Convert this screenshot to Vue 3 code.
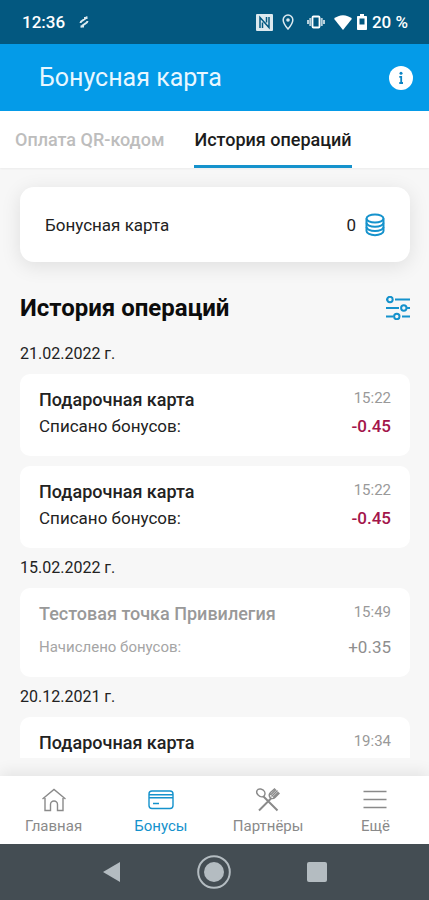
<template>
  <div class="app">
    <div class="status-bar">
      <div class="status-side">
        <span>12:36</span>
        <svg class="status-swirl" width="10" height="14" viewBox="0 0 10 14" aria-hidden="true">
          <path d="M1.500 8C1.500 5 6.500 5.500 8 1.500M2 12.500C3.500 8.500 8.500 9 8.500 6M5 3h3.500M1.500 11.500h3.500" />
        </svg>
      </div>
      <div class="status-side status-icons">
        <svg width="17" height="17" viewBox="0 0 17 17" aria-hidden="true">
          <rect width="17" height="17" rx="1" fill="#dce9ef" />
          <path d="M4 14V3.500L13 13.500V3M6.500 14V8.500M10.500 8.500V3" fill="none" stroke="#035880" stroke-width="1.500" />
        </svg>
        <svg class="pin" width="12" height="16" viewBox="0 0 12 16" aria-hidden="true">
          <path d="M6 1a4.800 4.800 0 0 0-4.800 4.900C1.200 9.300 6 15 6 15s4.800-5.700 4.800-9.100A4.800 4.800 0 0 0 6 1z" fill="none" stroke="#dce9ef" stroke-width="1.500" />
          <circle cx="6" cy="6" r="1.800" fill="#dce9ef" />
        </svg>
        <svg class="vibrate" width="18" height="14" viewBox="0 0 18 14" aria-hidden="true">
          <rect x="5.500" y="1.500" width="7" height="11" rx="1" fill="none" stroke="#fff" stroke-width="1.800" />
          <path d="M3.300 3v8M14.700 3v8M1 5v4M17 5v4" fill="none" stroke="#b9d1dc" stroke-width="2" />
        </svg>
        <svg width="18" height="15" viewBox="0 0 18 15" aria-hidden="true">
          <path d="M0 3.800C5-1 13-1 18 3.800L9 15z" fill="#fff" />
        </svg>
        <svg width="10" height="16" viewBox="0 0 10 16" aria-hidden="true">
          <path d="M3 0h4v2h2.200a.8.800 0 0 1 .8.800v12.400a.8.800 0 0 1-.8.800H.8a.8.800 0 0 1-.8-.8V2.800A.8.800 0 0 1 .8 2H3z" fill="#fff" />
          <path d="M2.500 4.500h5v6h-5z" fill="#035880" />
        </svg>
        <span>20 %</span>
      </div>
    </div>

    <header class="header">
      <h1>Бонусная карта</h1>
      <button class="icon-button" type="button" aria-label="Информация">
        <svg width="24" height="24" viewBox="0 0 24 24">
          <circle cx="12" cy="12" r="12" fill="#fff" />
          <circle cx="12" cy="7.200" r="1.500" fill="#0b84c4" />
          <path d="M10.300 10.800H12.200V16.500M10.300 17H14" fill="none" stroke="#0b84c4" stroke-width="1.800" />
        </svg>
      </button>
    </header>

    <nav class="tabs">
      <button
        v-for="tab in tabs"
        :key="tab"
        class="tab"
        :class="{ active: tab === activeTab }"
        type="button"
        @click="activeTab = tab"
      >
        {{ tab }}
      </button>
    </nav>

    <main class="content">
      <section class="balance">
        <span>Бонусная карта</span>
        <span class="balance-value">
          0
          <svg width="20" height="24" viewBox="0 0 20 24" aria-hidden="true">
            <ellipse cx="10" cy="5.500" rx="8.500" ry="4" />
            <path d="M1.500 5.500v12.500c0 2.300 3.800 4.200 8.500 4.200s8.500-1.900 8.500-4.200V5.500" />
            <path d="M1.500 9.700c0 2.300 3.800 4 8.500 4s8.500-1.700 8.500-4M1.500 14c0 2.300 3.800 4 8.500 4s8.500-1.700 8.500-4" />
          </svg>
        </span>
      </section>

      <div class="history-head">
        <h2>История операций</h2>
        <button class="icon-button" type="button" aria-label="Фильтр">
          <svg class="filter" width="24" height="24" viewBox="0 0 24 24">
            <path d="M0 3.500h1M9 3.500h15M0 12h13M21 12h3M0 20.500h7.500M16 20.500h8" />
            <circle cx="4" cy="3.500" r="2.700" />
            <circle cx="17.800" cy="12" r="2.700" />
            <circle cx="10.800" cy="20.500" r="2.700" />
          </svg>
        </button>
      </div>

      <section v-for="group in history" :key="group.date" class="group">
        <h3>{{ group.date }}</h3>
        <article
          v-for="(item, index) in group.items"
          :key="index"
          class="operation"
          :class="{ muted: item.muted }"
        >
          <div class="row">
            <span class="name">{{ item.name }}</span>
            <time>{{ item.time }}</time>
          </div>
          <div v-if="item.note" class="row">
            <span class="note">{{ item.note }}</span>
            <span class="amount">{{ item.amount }}</span>
          </div>
        </article>
      </section>
    </main>

    <nav class="bottom-nav">
      <a href="#">
        <svg width="26" height="26" viewBox="0 0 26 26" aria-hidden="true">
          <path d="M1.500 12L13 2.500 24.500 12M4 11v12.500h5.500v-6a3.500 3.500 0 0 1 7 0v6H22V11" />
        </svg>
        Главная
      </a>
      <a href="#" class="active">
        <svg width="26" height="26" viewBox="0 0 26 26" aria-hidden="true">
          <rect x="1" y="4" width="24" height="17.500" rx="3" />
          <path d="M1 7.800h24M1 10.800h24M5 16.500h6" />
        </svg>
        Бонусы
      </a>
      <a href="#">
        <svg width="26" height="26" viewBox="0 0 26 26" aria-hidden="true">
          <path d="M2 3.500C3.500.8 8 2 9.500 4.500c1.200 2.200.2 4.700-1.700 5.200C4.500 10.500.5 6.500 2 3.500z" />
          <path d="M8.500 9.500L22.500 23.500M4 23.500L16 11.500" stroke-width="2" />
          <path d="M20 1.500l-4.500 4c-1.500 1.500-1.500 3.500-.5 5s3.500 1.500 5 0l4.500-4.500M16.500 9.500l6-6M18 10.500l5.500-5.500M15.500 8l5.500-5.500" />
        </svg>
        Партнёры
      </a>
      <a href="#">
        <svg width="26" height="26" viewBox="0 0 26 26" aria-hidden="true">
          <path d="M1.500 4.500h23M1.500 12.500h23M1.500 20.500h23" stroke-width="1.600" />
        </svg>
        Ещё
      </a>
    </nav>

    <div class="system-bar">
      <button type="button" aria-label="Назад">
        <svg width="18" height="20" viewBox="0 0 18 20"><path d="M17 0v20L0 10z" fill="#b4bcc1" /></svg>
      </button>
      <button type="button" aria-label="Домой">
        <svg width="34" height="34" viewBox="0 0 34 34">
          <circle cx="17" cy="17" r="15.800" fill="none" stroke="#b4bcc1" stroke-width="2" />
          <circle cx="17" cy="17" r="10" fill="#b4bcc1" />
        </svg>
      </button>
      <button type="button" aria-label="Обзор">
        <svg width="20" height="20" viewBox="0 0 20 20"><rect width="20" height="20" rx="2" fill="#b4bcc1" /></svg>
      </button>
    </div>
  </div>
</template>

<script setup>
import { ref } from 'vue'

const tabs = ['Оплата QR-кодом', 'История операций']
const activeTab = ref('История операций')

const history = [
  {
    date: '21.02.2022 г.',
    items: [
      { name: 'Подарочная карта', time: '15:22', note: 'Списано бонусов:', amount: '-0.45' },
      { name: 'Подарочная карта', time: '15:22', note: 'Списано бонусов:', amount: '-0.45' },
    ],
  },
  {
    date: '15.02.2022 г.',
    items: [
      {
        name: 'Тестовая точка Привилегия',
        time: '15:49',
        note: 'Начислено бонусов:',
        amount: '+0.35',
        muted: true,
      },
    ],
  },
  {
    date: '20.12.2021 г.',
    items: [{ name: 'Подарочная карта', time: '19:34' }],
  },
]
</script>

<style>
body {
  margin: 0;
}
</style>

<style scoped>
.app {
  display: flex;
  flex-direction: column;
  height: 100vh;
  background: #f7f7f7;
  color: #222;
  font-family: Roboto, 'Noto Sans', sans-serif;
  font-size: 16px;
}

button {
  padding: 0;
  border: 0;
  background: none;
  font: inherit;
  cursor: pointer;
}

svg {
  display: block;
  flex-shrink: 0;
}

h1,
h2,
h3 {
  margin: 0;
}

.status-bar {
  display: flex;
  align-items: center;
  justify-content: space-between;
  height: 44px;
  padding: 0 21px 0 22px;
  background: #035880;
  color: #fff;
  font-size: 17px;
  font-weight: 500;
}

.status-side {
  display: flex;
  align-items: center;
  gap: 14px;
}

.status-icons {
  gap: 5px;
}

.status-swirl {
  fill: none;
  stroke: #dce9ef;
  stroke-width: 2;
}

.pin {
  margin: 0 8px 0 4px;
}

.vibrate {
  margin-right: 4px;
}

.header {
  display: flex;
  align-items: center;
  justify-content: space-between;
  height: 67px;
  padding: 0 16px 0 39px;
  background: #049be8;
  color: #e8f7ff;
}

.header h1 {
  font-size: 25px;
  font-weight: 400;
}

.tabs {
  display: flex;
  gap: 30px;
  height: 57px;
  padding: 0 15px;
  background: #fff;
  box-shadow: 0 1px 2px #0000000d;
}

.tab {
  border-top: 3px solid transparent;
  border-bottom: 3px solid transparent;
  color: #bdbdbd;
  font-size: 18px;
  font-weight: 500;
  white-space: nowrap;
}

.tab.active {
  border-bottom-color: #1592cc;
  color: #1c1c1c;
}

.content {
  flex: 1;
  min-height: 0;
  margin-bottom: 18px;
  padding: 19px 19px 0 20px;
  overflow-y: auto;
  scrollbar-width: none;
}

.balance {
  display: flex;
  align-items: center;
  justify-content: space-between;
  height: 75px;
  padding: 0 25px;
  border-radius: 14px;
  background: #fff;
  box-shadow: 0 4px 20px #0000001a;
  font-size: 17px;
}

.balance-value {
  display: flex;
  align-items: center;
  gap: 9px;
}

.balance svg,
.filter {
  fill: none;
  stroke: #1592cc;
  stroke-width: 2;
}

.history-head {
  display: flex;
  align-items: center;
  justify-content: space-between;
  margin: 31px 0 21px;
}

.history-head h2 {
  color: #0c0c0c;
  font-size: 24px;
  font-weight: 700;
  line-height: 30px;
}

.group {
  display: flex;
  flex-direction: column;
  gap: 10px;
  margin-bottom: 10px;
}

.group h3 {
  font-size: 16px;
  font-weight: 400;
  line-height: 20px;
}

.operation {
  display: flex;
  flex-direction: column;
  padding: 13px 19px 17px;
  border-radius: 10px;
  background: #fff;
  font-size: 17px;
  line-height: 26px;
}

.row {
  display: flex;
  justify-content: space-between;
}

.name,
.amount {
  font-weight: 500;
}

.name {
  font-size: 18px;
}

.amount {
  color: #a3154a;
}

time {
  color: #999;
  font-size: 15px;
  line-height: 22px;
}

.operation.muted {
  gap: 7px;
  color: #a5a5a5;
}

.muted .note {
  font-size: 15px;
}

.muted .amount {
  color: #8e8e8e;
  font-weight: 400;
}

.muted .name {
  color: #999;
}

.bottom-nav {
  display: flex;
  height: 68px;
  background: #fff;
  box-shadow: 0 -4px 14px #00000014;
}

.bottom-nav a {
  display: flex;
  flex: 1;
  flex-direction: column;
  align-items: center;
  gap: 4px;
  padding-top: 11px;
  color: #8a8a8a;
  font-size: 15px;
  line-height: 18px;
  text-decoration: none;
}

.bottom-nav a.active {
  color: #1592cc;
}

.bottom-nav svg {
  fill: none;
  stroke: currentColor;
  stroke-width: 1.4;
}

.system-bar {
  display: flex;
  justify-content: center;
  height: 56px;
  background: #444d53;
}

.system-bar button {
  display: flex;
  align-items: center;
  justify-content: center;
  width: 24%;
}
</style>
